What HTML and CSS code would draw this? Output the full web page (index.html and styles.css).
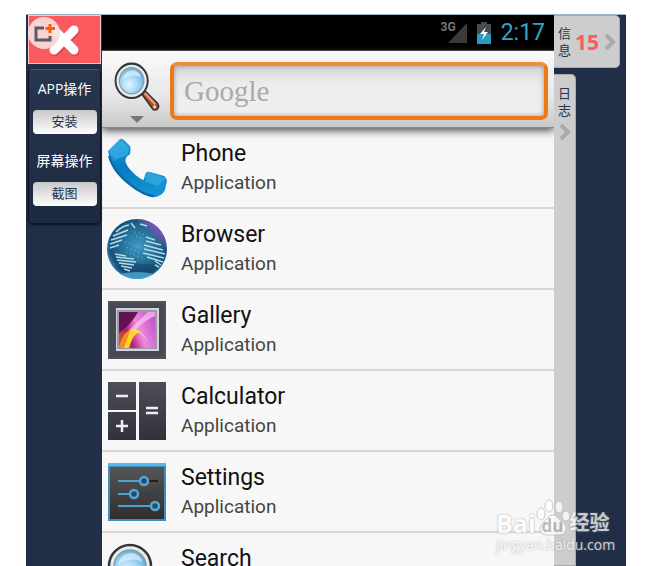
FILE: index.html
```html
<!DOCTYPE html>
<html lang="zh-CN">
<head>
  <meta charset="UTF-8" />
  <title>APP操作</title>
  <meta name="viewport" content="width=device-width, initial-scale=1" />
  <link rel="stylesheet" href="styles.css">
</head>
<body>
  <svg class="defs" aria-hidden="true">
    <defs>
      <radialGradient id="lens" cx="40%" cy="65%" r="65%">
        <stop offset="0" stop-color="#e2f6ff" />
        <stop offset="0.6" stop-color="#9bd3f3" />
        <stop offset="1" stop-color="#69add8" />
      </radialGradient>
      <symbol id="magnifier" viewBox="0 0 60 60">
        <path d="M36 39 L40 35 L57 51 Q60 55 56 58 Q53 60 50 57 Z" fill="#a64b2b" stroke="#333" stroke-width="2" />
        <path d="M40 38 L54 52" stroke="#ef9a70" stroke-width="3" />
        <circle cx="53" cy="55" r="2" fill="#ddd" />
        <circle cx="23" cy="23" r="21" fill="#e8ecee" stroke="#30363a" stroke-width="2.5" />
        <circle cx="23" cy="23" r="16" fill="url(#lens)" stroke="#889aa5" stroke-width="1.5" />
        <path d="M11 22 Q13 10 26 10 Q34 12 35 19 Q24 13 11 22Z" fill="#e5f5fc" opacity="0.65" />
      </symbol>
    </defs>
  </svg>

  <div class="app">
    <aside class="sidebar">
      <button class="close" aria-label="关闭">
        <svg width="70" height="48" viewBox="0 0 70 48">
          <path d="M25 14 L45 34 M45 14 L25 34" stroke="#e14b50" stroke-width="9" stroke-linecap="round" transform="translate(1 2)" />
          <path d="M25 14 L45 34 M45 14 L25 34" stroke="#fff" stroke-width="9" stroke-linecap="round" />
        </svg>
      </button>
      <span class="capture">
        <svg width="32" height="32" viewBox="0 0 32 32">
          <path d="M16 11 H8 V23 H22 V19" fill="none" stroke="#66595b" stroke-width="3" />
          <path d="M22 7 V16 M17.500 11.500 H27" stroke="#ff6000" stroke-width="3" />
        </svg>
      </span>
      <div class="panel">
        <h2>APP操作</h2>
        <button>安装</button>
        <h2>屏幕操作</h2>
        <button>截图</button>
      </div>
    </aside>

    <main class="phone">
      <div class="status">
        <span class="network">3G</span>
        <svg class="signal" width="20" height="22" viewBox="0 0 20 22"><path d="M0 21 L19 1 V21Z" fill="#3b3b3b" /></svg>
        <svg width="16" height="22" viewBox="0 0 16 22">
          <path d="M5 0 H11 V2 H15 V22 H1 V2 H5Z" fill="#454c50" />
          <path d="M1 12 H15 V22 H1Z" fill="#2d9ac0" />
          <path d="M10 5 L4 12 H8 L6 18 L12 10 H8Z" fill="#fff" />
        </svg>
        <time>2:17</time>
      </div>

      <div class="search">
        <button class="source" aria-label="Search source">
          <svg width="46" height="49" viewBox="0 0 60 60" preserveAspectRatio="none"><use href="#magnifier" /></svg>
          <svg width="14" height="7" viewBox="0 0 14 7"><path d="M0 0 H14 L7 7Z" fill="#777" /></svg>
        </button>
        <input type="text" placeholder="Google" aria-label="Google" />
      </div>

      <ul class="results">
        <li>
          <svg width="60" height="60" viewBox="0 0 60 60">
            <defs><linearGradient id="handset" x1="0" y1="0" x2="0.4" y2="1"><stop offset="0" stop-color="#2ba9e4" /><stop offset="0.5" stop-color="#067bc0" /><stop offset="1" stop-color="#1391d0" /></linearGradient></defs>
            <path d="M1 13 L13 1 Q15 0 18 3 L23 8 Q24 10 23 16 Q15 21 21 29 Q28 38 36 42 Q37 42 38 37 Q39 33 43 34 L57 38 Q60 40 60 43 L58 52 Q56 57 49 59 Q42 60 34 55 Q20 48 9 34 Q3 25 1 13Z" fill="url(#handset)" />
            <path d="M2 13 L13 2 L22 9 L21 17 L8 22Z M38 38 Q39 33 43 34 L59 40 L51 48 L39 44Z" fill="#44bced" opacity="0.5" />
            <path d="M2 18 Q6 34 24 47 Q36 57 47 58" fill="none" stroke="#0b66a5" stroke-width="2" />
          </svg>
          <a href="#phone"><strong>Phone</strong><span>Application</span></a>
        </li>
        <li>
          <svg width="60" height="62" viewBox="0 0 60 62">
            <defs>
              <radialGradient id="globe" cx="52%" cy="45%" r="55%"><stop offset="0" stop-color="#3d9ac4" /><stop offset="0.6" stop-color="#20688f" /><stop offset="0.85" stop-color="#17507b" /><stop offset="1" stop-color="#3b89b5" /></radialGradient>
              <linearGradient id="rim" x1="0.4" y1="0.6" x2="0.9" y2="0.1"><stop offset="0.65" stop-color="#b957d6" stop-opacity="0" /><stop offset="1" stop-color="#a855cc" /></linearGradient>
            </defs>
            <circle cx="30" cy="31" r="30" fill="url(#globe)" />
            <circle cx="30" cy="31" r="30" fill="url(#rim)" />
            <path d="M7 48 Q30 43 53 48 Q45 60 30 61 Q15 60 7 48Z" fill="#123f67" opacity="0.5" />
            <path d="M13 56 Q30 52 47 56 Q39 61 30 61 Q21 61 13 56Z" fill="#51b5db" opacity="0.7" />
            <path d="M9 14 Q15 8 22 7 M6 18 L21 12 M4 22 L20 17 M3 26 L15 22 M3 30 L12 27 M24 5 L28 10 M33 6 L40 8 M8 36 L19 38 M9 39 L27 41 M10 42 L29 44 M12 45 L27 47 M14 48 L25 50 M17 51 L23 53 M39 19 L48 22 M39 23 L54 27 M37 27 L56 32 M37 31 L58 36 M36 35 L57 40 M40 39 L56 44 M48 43 L54 47 M48 47 L52 49" fill="none" stroke="#b5dae4" stroke-width="1.500" />
            <path d="M18 24 L34 30 M20 29 L34 35 M19 34 L35 40 M28 14 L38 17 M29 18 L37 21" stroke="#81bdd2" stroke-width="1" stroke-dasharray="1 3" />
          </svg>
          <a href="#browser"><strong>Browser</strong><span>Application</span></a>
        </li>
        <li>
          <svg width="60" height="60" viewBox="0 0 60 60">
            <defs>
              <linearGradient id="photo" x1="0" y1="0.7" x2="1" y2="0.3"><stop offset="0" stop-color="#d85124" /><stop offset="0.25" stop-color="#b81f75" /><stop offset="0.55" stop-color="#ef8add" /><stop offset="1" stop-color="#c356cb" /></linearGradient>
            </defs>
            <path d="M1 1 H59 V59 H1Z" fill="#484955" />
            <path d="M2 2 H58 V58 H2Z" fill="none" stroke="#5a5b64" />
            <path d="M9 8 H52 V51 H9Z" fill="#d2d3d8" />
            <path d="M10 10 H50 V49 H10Z" fill="#99a" />
            <path d="M12 12 H48 V48 H12Z" fill="url(#photo)" />
            <path d="M12 12 H31 Q24 25 12 33Z" fill="#651155" />
            <path d="M12 48 Q16 32 25 29 Q31 28 34 33 Q27 31 22 48Z" fill="#ffd52d" />
            <path d="M12 48 Q16 31 23 31 L17 48Z" fill="#f58b23" />
            <path d="M22 30 L41 12 H48 V16 Q34 22 27 32 Q36 29 41 42 Q33 29 22 30Z" fill="#ffd7f4" opacity="0.6" />
          </svg>
          <a href="#gallery"><strong>Gallery</strong><span>Application</span></a>
        </li>
        <li>
          <svg width="60" height="60" viewBox="0 0 60 60">
            <defs><linearGradient id="key" x1="0" y1="0" x2="0" y2="1"><stop offset="0" stop-color="#4d4e58" /><stop offset="1" stop-color="#31323a" /></linearGradient></defs>
            <path d="M1 1 H29 V29 H1Z M1 31 H29 V59 H1Z M32 1 H59 V59 H32Z" fill="url(#key)" />
            <path d="M9 15 H21 M9 45 H21 M15 39 V51 M39 27 H51 M39 32 H51" stroke="#eee" stroke-width="2.500" />
          </svg>
          <a href="#calculator"><strong>Calculator</strong><span>Application</span></a>
        </li>
        <li>
          <svg width="60" height="60" viewBox="0 0 60 60">
            <defs><linearGradient id="board" x1="0" y1="0" x2="0" y2="1"><stop offset="0" stop-color="#555" /><stop offset="1" stop-color="#302f2f" /></linearGradient></defs>
            <path d="M1 1 H59 V59 H1Z" fill="#438cc0" />
            <path d="M1 1 H59 V4 H1Z" fill="#55bbea" />
            <path d="M3 5 H57 V57 H3Z" fill="url(#board)" />
            <path d="M38 19 H51 M30 32 H51" stroke="#222" stroke-width="2" />
            <path d="M30 32 H51" stroke="#3f617c" />
            <path d="M11 19 H36 M11 32 H25 M11 44 H47" stroke="#519fd1" stroke-width="2" />
            <g fill="#244d74" stroke="#5ba5d2" stroke-width="2.500"><circle cx="37" cy="19" r="4" /><circle cx="27" cy="32" r="4" /><circle cx="48" cy="44" r="4" /></g>
          </svg>
          <a href="#settings"><strong>Settings</strong><span>Application</span></a>
        </li>
        <li>
          <svg width="60" height="60" viewBox="0 0 60 60"><use href="#magnifier" /></svg>
          <a href="#search"><strong>Search</strong><span>Application</span></a>
        </li>
      </ul>
    </main>

    <aside class="tabs">
      <button class="tab info">
        <span class="label">信息</span>
        <b>15</b>
        <svg width="12" height="18" viewBox="0 0 12 18"><path d="M2 2 L9 9 L2 16" fill="none" stroke="#aaa" stroke-width="4" /></svg>
      </button>
      <button class="tab log">
        <span class="label">日志</span>
        <svg width="12" height="18" viewBox="0 0 12 18"><path d="M2 2 L9 9 L2 16" fill="none" stroke="#aaa" stroke-width="4" /></svg>
      </button>
    </aside>

    <div class="watermark">
      <div class="brand">
        <span>Bai</span>
        <span class="paw">
          <svg width="34" height="37" viewBox="0 0 34 37">
            <g fill="#fff" stroke="#bbb"><ellipse cx="5" cy="15" rx="4" ry="6" /><ellipse cx="13" cy="7" rx="4" ry="6" /><ellipse cx="23" cy="8" rx="4" ry="6" /><ellipse cx="30" cy="17" rx="4" ry="5" /><path d="M17 16 Q21 16 24 21 Q31 25 30 31 Q29 36 22 36 H11 Q4 36 4 30 Q4 25 10 21 Q13 16 17 16Z" /></g>
          </svg>
          <i>du</i>
        </span>
        <span class="cn">经验</span>
      </div>
      <div class="site">jingyan.baidu.com</div>
    </div>
  </div>
</body>
</html>
```

FILE: styles.css
```css
* { box-sizing: border-box; }
body {
  margin: 0; padding: 14px 21px 0 26px; height: 100vh; overflow: hidden;
  background: #fff; font-family: "Liberation Sans", "Noto Sans CJK SC", sans-serif;
}
button { border: 0; padding: 0; font-family: inherit; cursor: pointer; }
svg { display: block; flex: none; fill: none; }
h2, ul { margin: 0; padding: 0; }
.defs { position: absolute; width: 0; height: 0; }

.app {
  position: relative; display: grid; grid-template-columns: 76px 1fr 72px;
  height: 100%; overflow: hidden; background: #202f47; border-top: 1px solid #9fb4c5;
}

/* left tools */
.sidebar { position: relative; padding-left: 2px; }
.close { display: block; width: 73px; height: 49px; background: #fb5b5f; border: 1px solid #f6c8cb; overflow: hidden; }
.capture {
  position: absolute; left: 2px; top: 2px; width: 32px; height: 32px;
  border-radius: 50%; background: rgba(245, 225, 225, 0.9);
}
.panel {
  display: flex; flex-direction: column; align-items: center;
  margin: 5px 0 0; width: 73px; height: 155px; padding: 7px 4px;
  border: 1px solid #0c1627; border-top-color: #465269; border-radius: 5px;
  background: linear-gradient(#27354e, #1c2a41); box-shadow: 0 1px 2px #0a1322;
}
.panel h2 { font: 14px/24px "Open Sans", "Noto Sans CJK SC", sans-serif; color: #fff; white-space: nowrap; }
.panel button {
  width: 64px; height: 24px; margin: 9px 0 15px; border-radius: 4px;
  background: linear-gradient(#c8c8c8, #fff); color: #27364e; font-size: 13px; line-height: 24px;
}

/* device screen */
.phone { background: #f7f7f7; font-family: Roboto, sans-serif; overflow: hidden; }
.status {
  display: flex; align-items: center; justify-content: flex-end; height: 36px; padding: 0 9px 0 0;
  background: #000; border-bottom: 1px solid #444; color: #33a5cc;
}
.network { align-self: flex-start; margin-top: 5px; font-size: 12px; font-weight: bold; color: #777; }
.signal { margin: 0 8px 0 -8px; }
.status time { margin-left: 9px; font-size: 23px; }
.search {
  position: relative; display: flex; gap: 10px; height: 77px; padding: 11px 6px 7px 12px;
  background: linear-gradient(#fafafa, #e7e7e7 60%, #c9c9c9); border-bottom: 1px solid #888;
  box-shadow: 0 3px 8px #555;
}
.source { display: flex; flex-direction: column; align-items: center; gap: 5px; width: 46px; background: none; }
.search input {
  flex: 1; min-width: 0; height: 58px; padding: 0 10px; outline: 0;
  border: 4px solid #ed7a12; border-top-color: #f09035; border-radius: 7px;
  background: linear-gradient(#d5d5d5, #ececec 35%, #f0f0f0); box-shadow: inset 0 0 5px #999;
  font: 29px "Liberation Serif", serif; color: #888;
}
.search input::placeholder { color: #aaa; opacity: 1; }
.results { list-style: none; }
.results li {
  display: flex; align-items: center; gap: 14px; height: 81px; padding: 0 5px;
  border-bottom: 2px solid #d7d7d7;
}
.results a { display: flex; flex-direction: column; gap: 4px; color: #111; text-decoration: none; }
.results strong { font-size: 23px; font-weight: normal; line-height: 26px; }
.results a span { font-size: 19px; line-height: 24px; color: #444; }

/* right tabs */
.tabs { display: flex; flex-direction: column; align-items: flex-start; gap: 6px; }
.tab {
  display: flex; align-items: center; background: #cdcdcd; border: 1px solid #aaa; border-left: 0;
  color: #26344d;
}
.label { width: 13px; font-size: 13px; line-height: 17px; word-break: break-all; }
.info { width: 66px; height: 53px; padding-left: 4px; gap: 4px; border-radius: 0 5px 5px 0; }
.info b { font: bold 21px "Open Sans", sans-serif; color: #ff5a5f; }
.info svg { margin-left: 1px; }
.log { flex: 1; flex-direction: column; width: 22px; padding-top: 10px; gap: 4px; border-radius: 0 5px 0 0; }

/* site mark over the screen */
.watermark { position: absolute; right: 13px; bottom: 12px; width: 117px; color: #fff; opacity: 0.75; text-shadow: 0 0 2px #888; }
.brand { display: flex; align-items: flex-end; font: bold 25px/26px "Open Sans", "Noto Sans CJK SC", sans-serif; white-space: nowrap; }
.paw { position: relative; }
.paw i { position: absolute; left: 0; bottom: 0; width: 100%; text-align: center; font-size: 17px; font-style: normal; line-height: 20px; color: #aaa; text-shadow: none; }
.cn { font-size: 20px; }
.site { font: 14px/18px "Open Sans", sans-serif; white-space: nowrap; }
```
